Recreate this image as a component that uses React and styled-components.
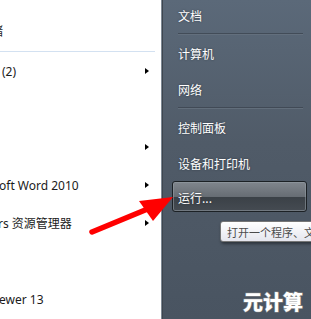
import React from "react";
import styled, { createGlobalStyle } from "styled-components";

const GlobalStyle = createGlobalStyle`
  html, body {
    margin: 0;
    padding: 0;
    background: #ffffff;
    overflow: hidden;
  }
  * { box-sizing: border-box; }
`;

const Screen = styled.div`
  position: relative;
  width: 311px;
  height: 319px;
  display: flex;
  overflow: hidden;
  font-family: "Noto Sans", "Noto Sans CJK SC", sans-serif;
`;

const LeftPanel = styled.div`
  width: 161px;
  height: 100%;
  background: #ffffff;
  display: flex;
  flex-direction: column;
  padding-top: 12px;
  overflow: hidden;
`;

const LeftRow = styled.div`
  height: 38px;
  flex-shrink: 0;
  display: flex;
  align-items: center;
  justify-content: space-between;
  padding-right: 12px;
  white-space: nowrap;
`;

const Label = styled.span`
  font-size: 12px;
  color: #1b1b1b;
  margin-left: ${(p) => p.$shift || 0}px;
`;

const SubArrow = styled.span`
  width: 0;
  height: 0;
  border-top: 3.5px solid transparent;
  border-bottom: 3.5px solid transparent;
  border-left: 4px solid #000;
`;

const LeftDivider = styled.div`
  height: 1px;
  margin: 1px 6px 0 0;
  background: #d3e1f1;
  flex-shrink: 0;
`;

const Edge = styled.div`
  width: 2px;
  height: 100%;
  background: #3e464f;
  border-left: 1px solid #7d8894;
`;

const RightPanel = styled.div`
  flex: 1;
  height: 100%;
  background: linear-gradient(180deg, #5b6979 0%, #505b68 45%, #495461 100%);
  padding: 0 4px 0 9px;
`;

const PlaceList = styled.div`
  display: flex;
  flex-direction: column;
  margin-top: -3px;
`;

const Place = styled.div`
  height: ${(p) => p.$h || 36}px;
  display: flex;
  align-items: center;
  padding: ${(p) => (p.$active ? "2px 0 0 5px" : "0 0 0 6px")};
  font-family: "Noto Sans CJK SC", sans-serif;
  font-size: 12px;
  color: #ffffff;
  text-shadow: 0 0 2px rgba(20, 28, 36, 0.6);
  border-radius: 3px;
  ${(p) =>
    p.$active &&
    `
    border: 1px solid #1c2125;
    box-shadow: inset 0 0 0 1px rgba(150, 158, 166, 0.55);
    background: linear-gradient(180deg, #80868d 0%, #666c73 52%, #3b4147 53%, #454b52 100%);
  `}
`;

const RightDivider = styled.div`
  height: 2px;
  margin: 0 4px 0 6px;
  border-top: 1px solid #3d4651;
  border-bottom: 1px solid #66727f;
  opacity: 0.8;
`;

const Tooltip = styled.div`
  position: absolute;
  left: 220px;
  top: 221px;
  height: 21px;
  padding: 0 6px;
  display: flex;
  align-items: center;
  white-space: nowrap;
  font-family: "Noto Sans CJK SC", sans-serif;
  font-size: 11px;
  color: #4b4b4b;
  background: linear-gradient(180deg, #ffffff 0%, #e5e6ee 100%);
  border: 1px solid #767676;
  border-radius: 3px;
  box-shadow: 1px 2px 3px rgba(0, 0, 0, 0.4);
`;

const Pointer = styled.svg`
  position: absolute;
  left: 0;
  top: 0;
  pointer-events: none;
`;

const Watermark = styled.div`
  position: absolute;
  left: 243px;
  top: 287px;
  font-family: "Noto Sans CJK SC", sans-serif;
  font-weight: 900;
  font-size: 20px;
  color: #ffffff;
  -webkit-text-stroke: 1px #8c8c8c;
  paint-order: stroke fill;
  text-shadow: 0 0 1px #6f6f6f;
`;

const leftItems = [
  { text: "(2)", shift: 2, sub: true },
  { text: "", sub: false },
  { text: "", sub: true },
  { text: "oft Word 2010", shift: -1, sub: true },
  { text: "rs 资源管理器", shift: -2, sub: true },
  { text: "", sub: false },
  { text: "ewer 13", shift: -1, sub: false },
];

export default function App() {
  return (
    <>
      <GlobalStyle />
      <Screen>
        <LeftPanel>
          <LeftRow>
            <Label $shift={-9}>储</Label>
          </LeftRow>
          <LeftDivider />
          {leftItems.map((item, i) => (
            <LeftRow key={i}>
              <Label $shift={item.shift}>{item.text}</Label>
              {item.sub && <SubArrow />}
            </LeftRow>
          ))}
        </LeftPanel>
        <Edge />
        <RightPanel>
          <PlaceList>
            <Place>文档</Place>
            <RightDivider />
            <Place>计算机</Place>
            <Place>网络</Place>
            <RightDivider />
            <Place>控制面板</Place>
            <Place>设备和打印机</Place>
            <Place $active $h={31}>运行...</Place>
          </PlaceList>
        </RightPanel>

        <Tooltip>打开一个程序、文件夹、文档或 Internet 资源。</Tooltip>

        <Pointer width="311" height="319" viewBox="0 0 311 319">
          <line x1="92" y1="232" x2="150" y2="208" stroke="#ff0000" strokeWidth="5.5" strokeLinecap="round" />
          <polygon points="139,201 173,197 153,221" fill="#ff0000" />
        </Pointer>

        <Watermark>元计算</Watermark>
      </Screen>
    </>
  );
}
